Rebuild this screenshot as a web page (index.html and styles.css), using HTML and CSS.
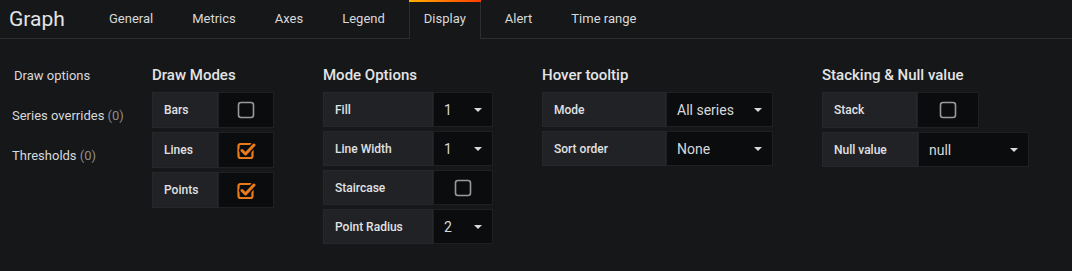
FILE: index.html
```html
<!DOCTYPE html>
<html>
<head>
<meta charset="utf-8">
<link rel="stylesheet" href="styles.css">
</head>
<body>
<header class="header">
  <div class="title">Graph</div>
  <nav class="tabs">
    <div class="tab">General</div>
    <div class="tab">Metrics</div>
    <div class="tab">Axes</div>
    <div class="tab">Legend</div>
    <div class="tab active">Display</div>
    <div class="tab">Alert</div>
    <div class="tab">Time range</div>
  </nav>
</header>
<main class="main">
  <aside class="sidebar">
    <div class="side-item side-active">Draw options</div>
    <div class="side-item">Series overrides <span class="muted">(0)</span></div>
    <div class="side-item">Thresholds <span class="muted">(0)</span></div>
  </aside>

  <section class="section s-draw">
    <h5 class="heading">Draw Modes</h5>
    <div class="row tall"><div class="label w66">Bars</div><div class="value check w56"><svg class="cb" viewBox="0 0 20 20"><rect x="2.5" y="2.5" width="15" height="15" rx="2.5" fill="none" stroke="#9a9a9c" stroke-width="1.6"/></svg></div></div>
    <div class="row tall"><div class="label w66">Lines</div><div class="value check w56"><svg class="cb" viewBox="0 0 20 20"><rect x="2.5" y="4" width="14" height="14" rx="2" fill="none" stroke="#eb7b18" stroke-width="2.2"/><path d="M6 10.5 L9.5 14 L18 5" fill="none" stroke="#0b0c0e" stroke-width="6" stroke-linecap="round" stroke-linejoin="round"/><path d="M6 10.5 L9.5 14 L18 5" fill="none" stroke="#eb7b18" stroke-width="3" stroke-linecap="round" stroke-linejoin="round"/></svg></div></div>
    <div class="row tall"><div class="label w66">Points</div><div class="value check w56"><svg class="cb" viewBox="0 0 20 20"><rect x="2.5" y="4" width="14" height="14" rx="2" fill="none" stroke="#eb7b18" stroke-width="2.2"/><path d="M6 10.5 L9.5 14 L18 5" fill="none" stroke="#0b0c0e" stroke-width="6" stroke-linecap="round" stroke-linejoin="round"/><path d="M6 10.5 L9.5 14 L18 5" fill="none" stroke="#eb7b18" stroke-width="3" stroke-linecap="round" stroke-linejoin="round"/></svg></div></div>
  </section>

  <section class="section s-mode">
    <h5 class="heading">Mode Options</h5>
    <div class="row"><div class="label w110">Fill</div><div class="value select w60"><span>1</span><i class="caret"></i></div></div>
    <div class="row"><div class="label w110">Line Width</div><div class="value select w60"><span>1</span><i class="caret"></i></div></div>
    <div class="row"><div class="label w110">Staircase</div><div class="value check w60"><svg class="cb" viewBox="0 0 20 20"><rect x="2.5" y="2.5" width="15" height="15" rx="2.5" fill="none" stroke="#9a9a9c" stroke-width="1.6"/></svg></div></div>
    <div class="row"><div class="label w110">Point Radius</div><div class="value select w60"><span>2</span><i class="caret"></i></div></div>
  </section>

  <section class="section s-hover">
    <h5 class="heading">Hover tooltip</h5>
    <div class="row"><div class="label w124">Mode</div><div class="value select w107"><span>All series</span><i class="caret"></i></div></div>
    <div class="row"><div class="label w124">Sort order</div><div class="value select w107"><span>None</span><i class="caret"></i></div></div>
  </section>

  <section class="section s-stack">
    <h5 class="heading">Stacking &amp; Null value</h5>
    <div class="row tall"><div class="label w95">Stack</div><div class="value check w62"><svg class="cb" viewBox="0 0 20 20"><rect x="2.5" y="2.5" width="15" height="15" rx="2.5" fill="none" stroke="#9a9a9c" stroke-width="1.6"/></svg></div></div>
    <div class="row"><div class="label w96">Null value</div><div class="value select w111"><span>null</span><i class="caret"></i></div></div>
  </section>
</main>
</body>
</html>
```

FILE: styles.css
```css
* { box-sizing: border-box; }

html, body {
  margin: 0;
  padding: 0;
  background: #161719;
  color: #d8d9da;
  font-family: Roboto, "Liberation Sans", Arial, sans-serif;
}

body {
  width: 1072px;
  height: 271px;
  overflow: hidden;
}

.header {
  display: flex;
  align-items: stretch;
  height: 39px;
  border-bottom: 1px solid #2c2d30;
  background: #161719;
}

.title {
  font-size: 21px;
  line-height: 38px;
  padding-left: 9px;
  width: 94px;
  flex-shrink: 0;
  color: #e3e4e5;
}

.tabs {
  display: flex;
  gap: 9px;
}

.tab {
  position: relative;
  padding: 0 15px;
  font-size: 13px;
  line-height: 38px;
  color: #d8d9da;
  white-space: nowrap;
}

.tab.active {
  border-left: 1px solid #2c2d30;
  border-right: 1px solid #2c2d30;
  background: #161719;
  height: 39px;
  margin-bottom: -1px;
  padding: 0 14px;
}

.tab.active::before {
  content: "";
  position: absolute;
  left: -1px;
  right: -1px;
  top: 0;
  height: 2px;
  background: linear-gradient(to right, #ffb000 0%, #ff6a00 60%, #ff3d00 100%);
}

.main {
  display: flex;
  padding-top: 27px;
}

.sidebar {
  width: 152px;
  flex-shrink: 0;
  display: flex;
  flex-direction: column;
  gap: 20px;
}

.side-item {
  font-size: 13px;
  line-height: 20px;
  padding-left: 12px;
  white-space: nowrap;
}

.side-active {
  padding-left: 14px;
}

.muted {
  color: #8e8e8e;
}

.section {
  flex-shrink: 0;
  margin-right: 49px;
  display: flex;
  flex-direction: column;
  gap: 4px;
}

.section:last-child {
  margin-right: 0;
}

.heading {
  margin: 0 0 4px 0;
  font-size: 15px;
  font-weight: 500;
  line-height: 18px;
  color: #e3e4e5;
  white-space: nowrap;
}

.row {
  display: flex;
  height: 35px;
}

.row.tall {
  height: 36px;
}

.label {
  display: flex;
  align-items: center;
  padding-left: 11px;
  background: #212226;
  border: 1px solid #26272a;
  font-size: 12px;
  font-weight: 500;
  color: #e0e1e2;
  white-space: nowrap;
}

.value {
  display: flex;
  align-items: center;
  background: #0b0c0e;
  border: 1px solid #1f2023;
}

.check {
  justify-content: center;
}

.select {
  justify-content: space-between;
  padding: 0 10px 0 10px;
  font-size: 14px;
  color: #d8d9da;
}

.caret {
  display: block;
  width: 0;
  height: 0;
  border-left: 4px solid transparent;
  border-right: 4px solid transparent;
  border-top: 4px solid #d8d9da;
  margin-top: 1px;
}

.cb {
  width: 20px;
  height: 20px;
  display: block;
}

.w56 { width: 56px; }
.w60 { width: 60px; }
.w62 { width: 62px; }
.w66 { width: 66px; }
.w95 { width: 95px; }
.w96 { width: 96px; }
.w107 { width: 107px; }
.w110 { width: 110px; }
.w111 { width: 111px; }
.w124 { width: 124px; }
```
